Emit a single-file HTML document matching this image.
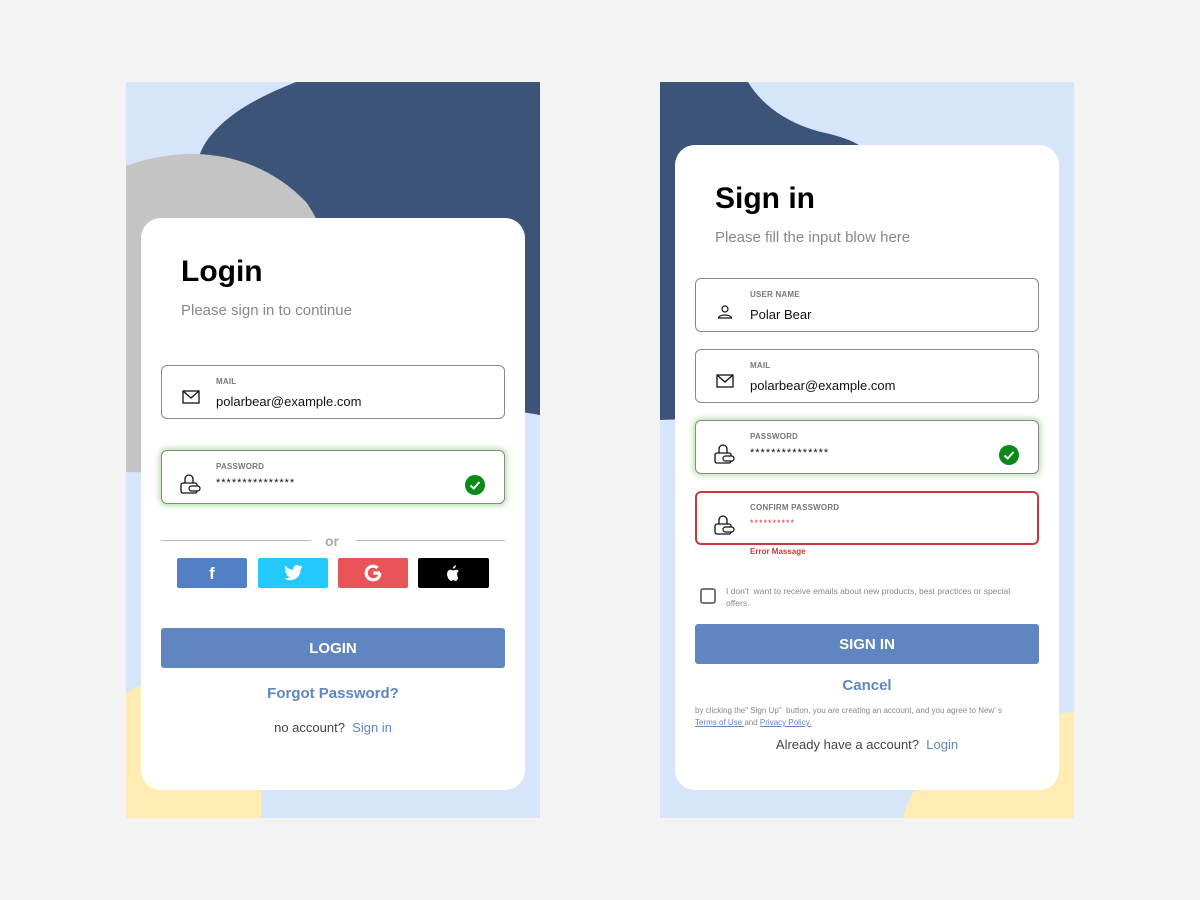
<!DOCTYPE html>
<html><head><meta charset="utf-8"><style>
*{box-sizing:border-box;margin:0;padding:0}
body{width:1200px;height:900px;background:#f3f3f3;font-family:"Liberation Sans",sans-serif;position:relative;overflow:hidden}
.panel{position:absolute;top:82px;width:414px;height:736px;background:#d7e5fa;overflow:hidden}
.card{position:absolute;background:#fff;border-radius:20px}
.abs{position:absolute}
h1{position:absolute;font-size:30px;font-weight:bold;color:#000}
.sub{position:absolute;font-size:15px;color:#888}
.field{position:absolute;left:20px;width:344px;height:54px;border:1px solid #888;border-radius:6px;background:#fff}
.field .lab{position:absolute;left:54px;top:11px;font-size:8px;color:#777;font-weight:bold;letter-spacing:.2px}
.field .val{position:absolute;left:54px;top:28px;font-size:13px;color:#111}
.field svg.ic{position:absolute;left:20px;top:24px}
.green{box-shadow:0 0 6px 2px #b9e3b0}
.red{border:2px solid #c9393d}
.check{position:absolute;right:19px;top:24px;width:20px;height:20px;border-radius:50%;background:#0b8a17}
.btn{position:absolute;left:20px;width:344px;height:40px;background:#5f86c0;border-radius:3px;color:#fff;font-weight:bold;font-size:15px;text-align:center;line-height:42px}
.link{color:#5f86c0}
.soc{position:absolute;top:340px;height:30px;border-radius:2px;color:#fff;text-align:center;font-weight:bold;overflow:hidden}
</style></head><body>

<!-- LEFT -->
<div class="panel" style="left:126px">
  <svg class="abs" style="left:0;top:0" width="414" height="736">
    <path d="M170 0 L414 0 L414 333 C330 320 260 300 200 250 C140 200 40 120 80 60 C100 30 140 12 170 0Z" fill="#3b5478"/>
    <path d="M0 84 C60 62 130 68 180 120 C210 160 220 250 160 330 C110 390 40 392 0 390Z" fill="#c4c4c4"/>
    <path d="M0 611 C50 580 120 600 135 660 L135 736 L0 736Z" fill="#feecb3"/>
  </svg>
  <div class="card" style="left:15px;top:136px;width:384px;height:572px">
    <h1 style="left:40px;top:37px">Login</h1>
    <div class="sub" style="left:40px;top:84px">Please sign in to continue</div>
    <div class="field" style="top:147px">
      <svg class="ic" width="18" height="14" viewBox="0 0 18 14"><rect x="1" y="1" width="16" height="12" fill="none" stroke="#111" stroke-width="1.3"/><path d="M1 1 L9 8 L17 1" fill="none" stroke="#111" stroke-width="1.3"/></svg>
      <div class="lab">MAIL</div><div class="val">polarbear@example.com</div>
    </div>
    <div class="field green" style="top:232px">
      <svg class="ic" style="top:22px;left:18px" width="22" height="22" viewBox="0 0 22 22"><path d="M5 10 V6 a4 4 0 0 1 8 0 V10" fill="none" stroke="#111" stroke-width="1.3"/><rect x="1" y="10" width="16" height="10" rx="2" fill="#fff" stroke="#111" stroke-width="1.3"/><rect x="9" y="13" width="11" height="5" rx="2.5" fill="#fff" stroke="#111" stroke-width="1.2"/></svg>
      <div class="lab">PASSWORD</div><div class="val" style="top:26px;font-size:11px;letter-spacing:1px">***************</div>
      <div class="check"><svg width="20" height="20"><path d="M5.5 10.5 L8.7 13.5 L14.5 7" fill="none" stroke="#fff" stroke-width="2"/></svg></div>
    </div>
    <div class="abs" style="left:20px;top:322px;width:150px;height:1px;background:#bbb"></div>
    <div class="abs" style="left:215px;top:322px;width:149px;height:1px;background:#bbb"></div>
    <div class="abs" style="left:184px;top:315px;font-size:14px;color:#aaa;font-weight:bold">or</div>
    <div class="soc" style="left:36px;width:70px;background:#5181c4;font-size:17px;line-height:31px">f</div>
    <div class="soc" style="left:117px;width:70px;background:#22c9fa"><svg width="70" height="30" viewBox="10 4.3 50 21.4"><path d="M42 10.5 c-.5.3-1.1.4-1.6.5 .6-.4 1-.9 1.2-1.5 -.5.3-1.1.5-1.7.7 a2.7 2.7 0 0 0-4.6 2.5 c-2.3-.1-4.3-1.2-5.6-2.8 -.8 1.3-.4 2.9.8 3.6 -.4 0-.9-.1-1.2-.3 0 1.3.9 2.4 2.2 2.7 -.4.1-.8.1-1.2 0 .3 1.1 1.4 1.9 2.5 1.9 -1.1.9-2.6 1.3-4 1.1 1.2.8 2.6 1.2 4.1 1.2 5 0 7.8-4.2 7.6-8 .5-.4 1-.9 1.3-1.5z" fill="#fff"/></svg></div>
    <div class="soc" style="left:197px;width:70px;background:#e95556"><svg width="70" height="30"><path d="M42 15 H35.5 M41.8 15 C41.8 19.5 38.8 21.8 35 21.8 A6.8 6.8 0 1 1 39.6 10" fill="none" stroke="#fff" stroke-width="3.2"/></svg></div>
    <div class="soc" style="left:277px;width:71px;background:#000"><svg width="71" height="30" viewBox="10.25 4.8 50.7 21.4"><path d="M38.2 16.2 c0-1.3 1.1-1.9 1.1-2 -.6-.9-1.6-1-1.9-1 -.8-.1-1.6.5-2 .5 -.4 0-1.1-.5-1.8-.5 -1.3 0-2.6 1-2.6 3 0 2.2 1.6 4.9 2.9 4.9 .6 0 1-.4 1.6-.4 .6 0 .9.4 1.6.4 .9 0 1.6-1.3 2-2.2 -.1 0-.9-.6-.9-2.7z M36.7 11.7 c.4-.5.7-1.1.6-1.7 -.5 0-1.2.4-1.5.8 -.4.4-.7 1-.6 1.6 .6.1 1.1-.3 1.5-.7z" fill="#fff"/></svg></div>
    <div class="btn" style="top:410px">LOGIN</div>
    <div class="abs link" style="left:0;width:384px;text-align:center;top:467px;font-size:15px;font-weight:bold">Forgot Password?</div>
    <div class="abs" style="left:0;width:384px;text-align:center;top:502px;font-size:13px;color:#444">no account?&nbsp; <span class="link">Sign in</span></div>
  </div>
</div>

<!-- RIGHT -->
<div class="panel" style="left:660px">
  <svg class="abs" style="left:0;top:0" width="414" height="736">
    <path d="M0 0 L88 0 C105 28 135 45 170 52 C185 56 195 60 200 64 L200 330 L0 338Z" fill="#3b5478"/>
    <path d="M414 630 C330 640 260 670 243 736 L414 736Z" fill="#feecb3"/>
  </svg>
  <div class="card" style="left:15px;top:63px;width:384px;height:645px">
    <h1 style="left:40px;top:37px">Sign in</h1>
    <div class="sub" style="left:40px;top:84px">Please fill the input blow here</div>
    <div class="field" style="top:133px">
      <svg class="ic" style="top:26px;left:21px" width="16" height="14" viewBox="0 0 16 14"><circle cx="8" cy="4" r="3" fill="none" stroke="#111" stroke-width="1.2"/><path d="M1.5 13 C2 9 14 9 14.5 13Z" fill="none" stroke="#111" stroke-width="1.2"/></svg>
      <div class="lab">USER NAME</div><div class="val">Polar Bear</div>
    </div>
    <div class="field" style="top:204px">
      <svg class="ic" width="18" height="14" viewBox="0 0 18 14"><rect x="1" y="1" width="16" height="12" fill="none" stroke="#111" stroke-width="1.3"/><path d="M1 1 L9 8 L17 1" fill="none" stroke="#111" stroke-width="1.3"/></svg>
      <div class="lab">MAIL</div><div class="val">polarbear@example.com</div>
    </div>
    <div class="field green" style="top:275px">
      <svg class="ic" style="top:22px;left:18px" width="22" height="22" viewBox="0 0 22 22"><path d="M5 10 V6 a4 4 0 0 1 8 0 V10" fill="none" stroke="#111" stroke-width="1.3"/><rect x="1" y="10" width="16" height="10" rx="2" fill="#fff" stroke="#111" stroke-width="1.3"/><rect x="9" y="13" width="11" height="5" rx="2.5" fill="#fff" stroke="#111" stroke-width="1.2"/></svg>
      <div class="lab">PASSWORD</div><div class="val" style="top:26px;font-size:11px;letter-spacing:1px">***************</div>
      <div class="check"><svg width="20" height="20"><path d="M5.5 10.5 L8.7 13.5 L14.5 7" fill="none" stroke="#fff" stroke-width="2"/></svg></div>
    </div>
    <div class="field red" style="top:346px">
      <svg class="ic" style="top:21px;left:17px" width="22" height="22" viewBox="0 0 22 22"><path d="M5 10 V6 a4 4 0 0 1 8 0 V10" fill="none" stroke="#111" stroke-width="1.3"/><rect x="1" y="10" width="16" height="10" rx="2" fill="#fff" stroke="#111" stroke-width="1.3"/><rect x="9" y="13" width="11" height="5" rx="2.5" fill="#fff" stroke="#111" stroke-width="1.2"/></svg>
      <div class="lab" style="left:53px;top:10px">CONFIRM PASSWORD</div><div class="val" style="left:53px;top:25px;font-size:9px;letter-spacing:1px;color:#c9393d">**********</div>
    </div>
    <div class="abs" style="left:75px;top:402px;font-size:8px;font-weight:bold;color:#c9393d">Error Massage</div>
    <div class="abs" style="left:25px;top:443px;width:16px;height:16px;border:2px solid #777;border-radius:3px"></div>
    <div class="abs" style="left:51px;top:440px;width:285px;font-size:8.5px;color:#888;line-height:12px">I don't&nbsp; want to receive emails about new products, best practices or special offers.</div>
    <div class="btn" style="top:479px">SIGN IN</div>
    <div class="abs link" style="left:0;width:384px;text-align:center;top:532px;font-size:15px;font-weight:bold">Cancel</div>
    <div class="abs" style="left:20px;top:560px;width:350px;font-size:8px;color:#888;line-height:12px">by clicking the" Sign Up" &nbsp;button, you are creating an account, and you agree to New' s<br><span class="link" style="text-decoration:underline">Terms of Use </span>and <span class="link" style="text-decoration:underline">Privacy Policy.</span></div>
    <div class="abs" style="left:0;width:384px;text-align:center;top:592px;font-size:13px;color:#444">Already have a account?&nbsp; <span class="link">Login</span></div>
  </div>
</div>
</body></html>
